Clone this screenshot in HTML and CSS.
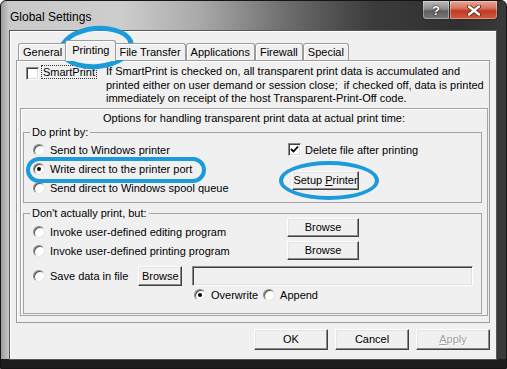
FILE: index.html
```html
<!DOCTYPE html>
<html>
<head>
<meta charset="utf-8">
<title>Global Settings</title>
<link rel="stylesheet" href="styles.css">
</head>
<body>
<div class="window">
  <div class="titlebar">
    <span class="title">Global Settings</span>
    <div class="caption-btns">
      <span class="cap help">?</span>
      <span class="cap close">
        <svg width="14" height="11" viewBox="0 0 14 11">
          <path d="M2 1.5 L12 9.5 M12 1.5 L2 9.5" stroke="#5a1a10" stroke-width="4" stroke-linecap="round"/>
          <path d="M2 1.5 L12 9.5 M12 1.5 L2 9.5" stroke="#fff" stroke-width="2.4" stroke-linecap="round"/>
        </svg>
      </span>
    </div>
  </div>
  <div class="client">
    <div class="tabs">
      <span class="tab">General</span>
      <span class="tab active">Printing</span>
      <span class="tab">File Transfer</span>
      <span class="tab">Applications</span>
      <span class="tab">Firewall</span>
      <span class="tab">Special</span>
    </div>
    <div class="panel">
      <div class="smart">
        <div class="smart-left">
          <span class="check"></span>
          <span class="focus">SmartPrint</span>
        </div>
        <div class="smart-desc">If SmartPrint is checked on, all transparent print data is accumulated and<br>printed either on user demand or session close;&nbsp; if checked off, data is printed<br>immediately on receipt of the host Transparent-Print-Off code.</div>
      </div>
      <div class="frame">
        <div class="options">Options for handling transparent print data at actual print time:</div>
        <fieldset class="group g1">
          <legend>Do print by:</legend>
          <div class="g1-body">
            <div class="radios">
              <div class="opt"><span class="radio"></span>Send to Windows printer</div>
              <div class="opt"><span class="radio on"></span>Write direct to the printer port</div>
              <div class="opt"><span class="radio"></span>Send direct to Windows spool queue</div>
            </div>
            <div class="side">
              <div class="opt"><span class="check on"><svg width="9" height="9" viewBox="0 0 9 9"><path d="M1 4 L3.5 6.5 L8 1.5" fill="none" stroke="#000" stroke-width="1.8"/></svg></span><span class="side-label">Delete file after printing</span></div>
              <button class="btn setup">Setup <u>P</u>rinter</button>
            </div>
          </div>
        </fieldset>
        <fieldset class="group g2">
          <legend>Don't actually print, but:</legend>
          <div class="g2-top">
            <div class="radios">
              <div class="opt"><span class="radio"></span>Invoke user-defined editing program</div>
              <div class="opt"><span class="radio"></span>Invoke user-defined printing program</div>
            </div>
            <div class="browse-col">
              <button class="btn browse">Browse</button>
              <button class="btn browse">Browse</button>
            </div>
          </div>
          <div class="save-row">
            <span class="radio"></span><span>Save data in file</span>
            <button class="btn small">Browse</button>
            <span class="field"></span>
          </div>
          <div class="mode-row">
            <span class="radio on"></span><span>Overwrite</span>
            <span class="radio gap"></span><span>Append</span>
          </div>
        </fieldset>
      </div>
    </div>
    <div class="actions">
      <button class="btn act">OK</button>
      <button class="btn act">Cancel</button>
      <button class="btn act disabled"><u>A</u>pply</button>
    </div>
  </div>
  <div class="mark m1"></div>
  <div class="mark m2"></div>
  <div class="mark m3"></div>
</div>
</body>
</html>
```

FILE: styles.css
```css
html, body {
  margin: 0;
  padding: 0;
  background: #ffffff;
}

body {
  font-family: "Liberation Sans", Arial, sans-serif;
  font-size: 11px;
  color: #000;
}

.window {
  position: relative;
  width: 507px;
  height: 369px;
  box-sizing: border-box;
  border: 1px solid #151515;
  border-radius: 6px 6px 0 0;
  overflow: hidden;
  background:
    linear-gradient(to bottom, rgba(0,0,0,0) 358px, #1d1d1d 358px),
    linear-gradient(to right, #9c9c9c 0px, #c9c9c9 8px, #cdcdcd 120px, #a8a8a8 200px, #6a6a6a 290px, #3c3c3c 370px, #2f2f2f 460px, #3a3a3a 100%);
  display: flex;
  flex-direction: column;
}

.titlebar {
  height: 29px;
  flex: none;
  display: flex;
  align-items: flex-start;
}

.title {
  margin: 8px 0 0 9px;
  font-size: 12px;
  line-height: 16px;
  color: #000;
}

.caption-btns {
  margin-left: auto;
  margin-right: 8px;
  display: flex;
}

.cap {
  height: 19px;
  box-sizing: border-box;
  border: 1px solid #2a2a2a;
  border-top: none;
  display: flex;
  align-items: center;
  justify-content: center;
  box-shadow: inset 0 0 0 1px rgba(255,255,255,0.35);
}

.help {
  width: 28px;
  border-radius: 0 0 0 4px;
  background: linear-gradient(to bottom, #b9b9b9 0%, #8e8e8e 45%, #5e5e5e 55%, #7a7a7a 100%);
  color: #fff;
  font-weight: bold;
  font-size: 13px;
  text-shadow: 0 0 2px #222, 0 0 1px #000;
}

.close {
  width: 48px;
  border-left: none;
  border-radius: 0 0 4px 0;
  background: linear-gradient(to bottom, #e8a696 0%, #d77561 40%, #c13a22 55%, #cf5a41 100%);
}

.client {
  margin-left: 8px;
  width: 488px;
  height: 330px;
  box-sizing: border-box;
  border: 1px solid #575757;
  background: #f0f0f0;
  box-shadow: inset 1px 1px 0 #ffffff;
  padding: 9px 6px 0 6px;
}

.tabs {
  display: flex;
  height: 20px;
  padding-left: 2px;
  position: relative;
  z-index: 1;
}

.tab {
  margin-top: 3px;
  height: 17px;
  box-sizing: border-box;
  padding: 0 4px;
  border: 1px solid #9c9c9c;
  border-bottom: none;
  border-radius: 3px 3px 0 0;
  box-shadow: inset 1px 1px 0 #ffffff;
  line-height: 16px;
  white-space: nowrap;
  background: #f0f0f0;
}

.tab.active {
  margin: 0 -2px;
  height: 21px;
  padding: 0 6px;
  line-height: 18px;
  position: relative;
  z-index: 2;
}

.panel {
  height: 263px;
  box-sizing: border-box;
  border: 1px solid #9c9c9c;
  box-shadow: inset 1px 1px 0 #ffffff;
}

.smart {
  display: flex;
  height: 47px;
  box-sizing: border-box;
  padding: 4px 0 0 9px;
}

.smart-left {
  width: 80px;
  display: flex;
  align-items: flex-start;
}

.check {
  width: 13px;
  height: 13px;
  box-sizing: border-box;
  flex: none;
  background: #fff;
  border: 1px solid;
  border-color: #8a8a8a #ffffff #ffffff #8a8a8a;
  box-shadow: inset 1px 1px 0 #404040, inset -1px -1px 0 #d8d8d8;
  display: flex;
  align-items: center;
  justify-content: center;
}

.smart-left .check {
  margin-top: 2px;
}

.focus {
  margin-left: 2px;
  padding: 0 1px;
  border: 1px dotted #333;
  line-height: 12px;
  margin-top: 0px;
}

.smart-desc {
  line-height: 13.5px;
  white-space: nowrap;
}

.frame {
  width: 468px;
  height: 208px;
  margin-left: 3px;
  box-sizing: border-box;
  border: 1px solid #a4a4a4;
  box-shadow: inset 1px 1px 0 #ffffff;
  padding: 3px 0 0 2px;
}

.options {
  text-align: center;
  line-height: 13px;
  padding-right: 2px;
}

fieldset.group {
  margin: 0;
  padding: 0;
  min-width: 0;
  width: 459px;
  box-sizing: border-box;
  border: 1px solid #a4a4a4;
}

legend {
  margin-left: 6px;
  padding: 0 2px;
  line-height: 14px;
}

.g1-body {
  display: grid;
  grid-template-columns: 255px auto;
  padding: 1px 0 5px 9px;
}

.opt {
  display: flex;
  align-items: center;
  height: 19px;
  white-space: nowrap;
}

.radio {
  position: relative;
  width: 12px;
  height: 12px;
  flex: none;
  box-sizing: border-box;
  border-radius: 50%;
  background: #fff;
  border: 1px solid;
  border-color: #8a8a8a #e6e6e6 #e6e6e6 #8a8a8a;
  box-shadow: inset 1px 1px 0 #505050;
  margin-right: 5px;
}

.radio.on::after {
  content: "";
  position: absolute;
  left: 3px;
  top: 3px;
  width: 4px;
  height: 4px;
  border-radius: 50%;
  background: #000;
}

.side-label {
  margin-left: 4px;
}

.btn {
  font-family: inherit;
  font-size: 11px;
  color: #000;
  margin: 0;
  padding: 0;
  height: 19px;
  box-sizing: border-box;
  background: #f0f0f0;
  border: 1px solid;
  border-color: #ffffff #404040 #404040 #ffffff;
  box-shadow: inset -1px -1px 0 #8a8a8a, inset 1px 1px 0 #e4e4e4;
  border-radius: 0;
  line-height: 15px;
  text-align: center;
}

.setup {
  width: 67px;
  margin: 12px 0 0 4px;
}

.g2 {
  margin-top: 3px !important;
}

.g2-top {
  display: grid;
  grid-template-columns: 254px auto;
  padding-left: 9px;
}

.g2-top .radios {
  padding-top: 2px;
}

.browse-col {
  margin-top: -2px;
  display: flex;
  flex-direction: column;
  gap: 4px;
}

.browse {
  width: 72px;
}

.save-row {
  display: flex;
  align-items: center;
  height: 20px;
  margin-top: 6px;
  padding-left: 9px;
  white-space: nowrap;
}

.small {
  width: 44px;
  height: 20px;
  margin-left: 10px;
}

.field {
  flex: 1;
  height: 20px;
  margin: 0 8px 0 10px;
  box-sizing: border-box;
  background: #f0f0f0;
  border: 1px solid;
  border-color: #8a8a8a #ffffff #ffffff #8a8a8a;
  box-shadow: inset 1px 1px 0 #404040, inset -1px -1px 0 #e0e0e0;
}

.mode-row {
  display: flex;
  align-items: center;
  height: 16px;
  margin-top: 1px;
  padding: 0 0 10px 170px;
  white-space: nowrap;
}

.radio.gap {
  margin-left: 5px;
}

.actions {
  display: flex;
  justify-content: flex-end;
  gap: 7px;
  margin-top: 6px;
}

.act {
  width: 74px;
  height: 21px;
  line-height: 17px;
}

.act.disabled {
  color: #a0a0a0;
  text-shadow: 1px 1px 0 #ffffff;
}

.mark {
  position: absolute;
  box-sizing: border-box;
  border: 4px solid #1b9bd9;
  border-radius: 50%;
  pointer-events: none;
}

.m1 {
  left: 58px;
  top: 25px;
  width: 75px;
  height: 43px;
  border-width: 5px;
  transform: rotate(-5deg);
}

.m2 {
  left: 25px;
  top: 156px;
  width: 180px;
  height: 26px;
  border-radius: 13px;
}

.m3 {
  left: 278px;
  top: 160px;
  width: 100px;
  height: 39px;
}
```
